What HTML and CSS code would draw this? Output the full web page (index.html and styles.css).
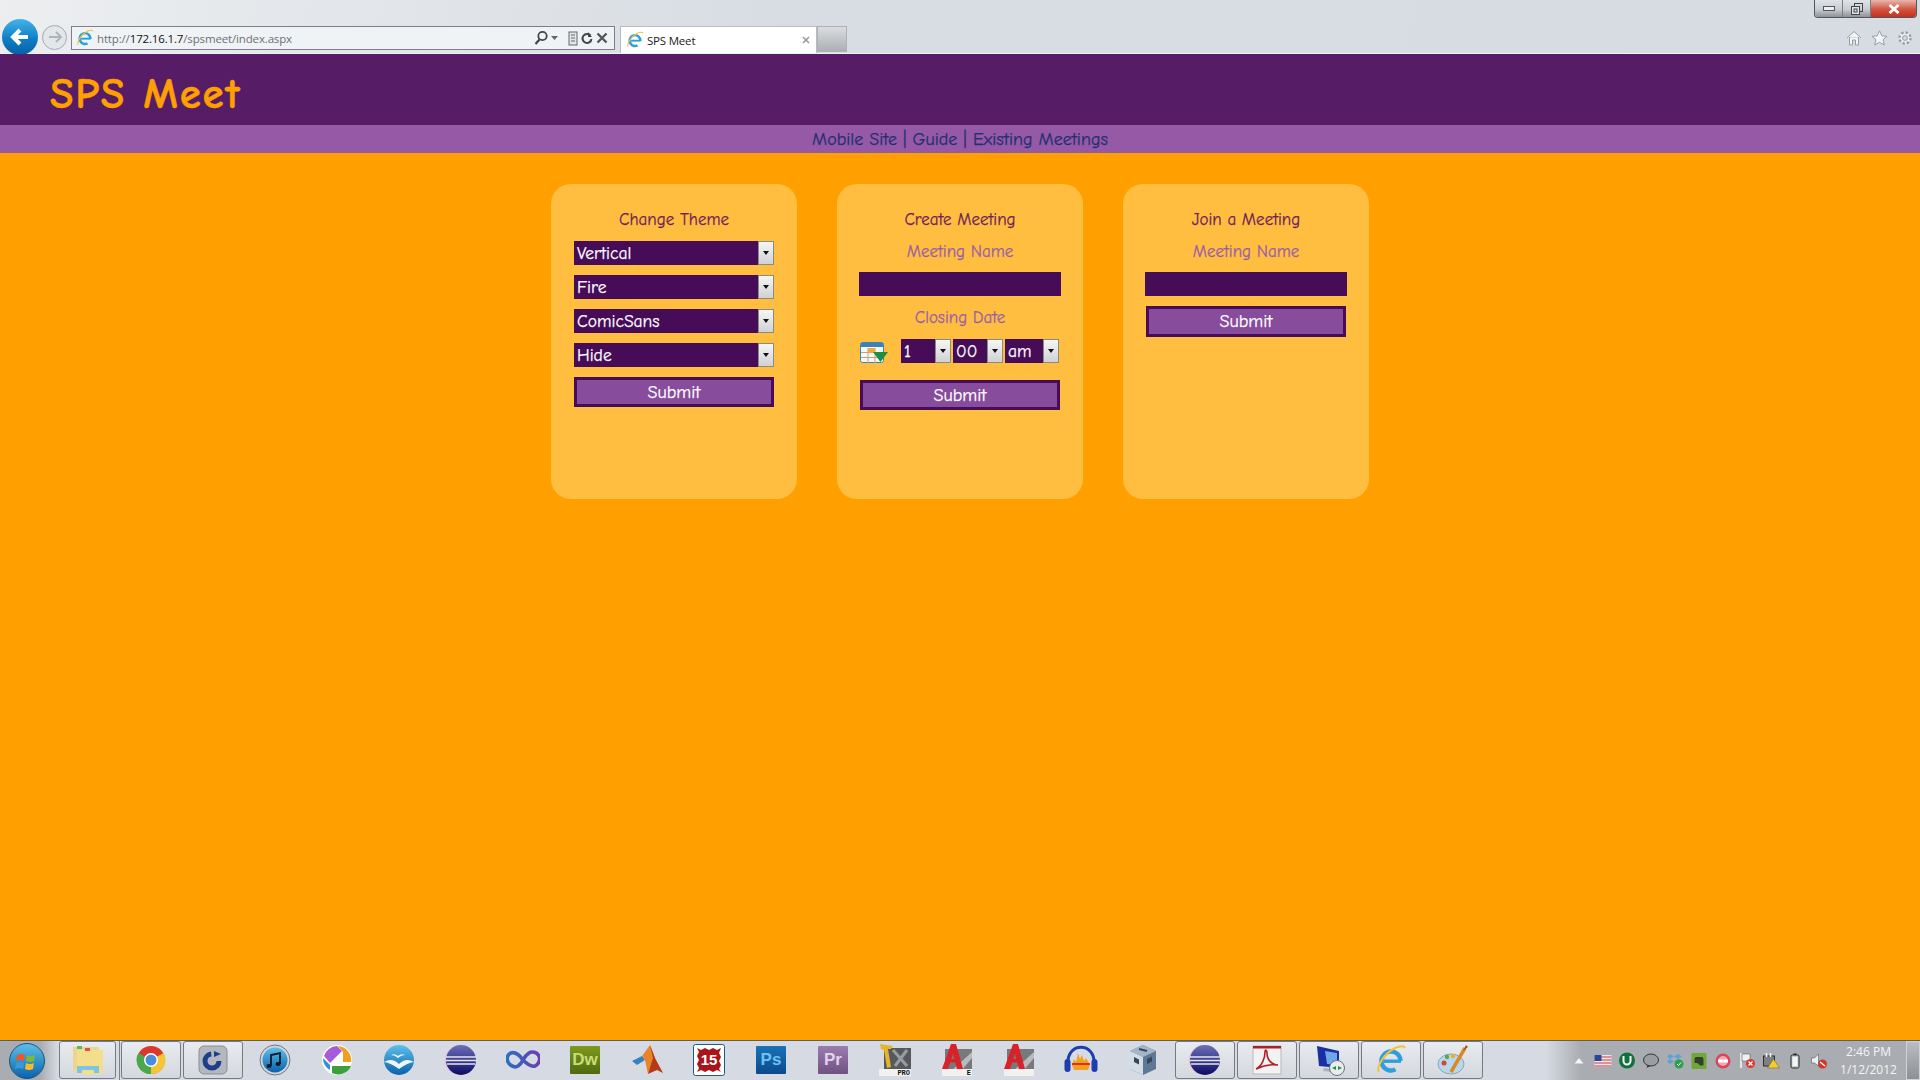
FILE: index.html
```html
<!DOCTYPE html>
<html lang="en">
<head>
  <meta charset="UTF-8" />
  <title>SPS Meet</title>
  <link rel="stylesheet" href="styles.css">
</head>
<body>
  <svg class="defs" width="0" height="0">
    <defs>
      <linearGradient id="gBlue" x1="0" y1="0" x2="0" y2="1"><stop offset="0" stop-color="#5cc0ea"/><stop offset="1" stop-color="#0a62ac"/></linearGradient>
      <linearGradient id="gNavy" x1="0" y1="0" x2="0" y2="1"><stop offset="0" stop-color="#6d6fb8"/><stop offset="1" stop-color="#0c0c62"/></linearGradient>
      <linearGradient id="gInf" x1="0" x2="1" y1="0" y2="0"><stop offset="0" stop-color="#2a6fc0"/><stop offset="1" stop-color="#6a3fb0"/></linearGradient>
      <symbol id="ie" viewBox="0 0 32 32">
        <circle cx="16" cy="17" r="9.500" fill="none" stroke="#2f9fdc" stroke-width="4.500" stroke-dasharray="49 11" transform="rotate(62 16 17)"/>
        <rect x="9" y="15.500" width="17" height="3.400" fill="#2f9fdc"/>
        <path d="M4 28C1 24 8 10 20 4c5-2 9-2 10 0" fill="none" stroke="#f3c33b" stroke-width="2"/>
      </symbol>
      <symbol id="eclipse" viewBox="0 0 32 32">
        <circle cx="15" cy="16" r="15" fill="#e9b6dc"/>
        <circle cx="16" cy="16" r="15" fill="url(#gNavy)"/>
        <path d="M1 13h30M1 16.500h30M2 20h28" stroke="#e6e6f2" stroke-width="1.300"/>
      </symbol>
      <symbol id="acad" viewBox="0 0 32 32">
        <rect x="4" y="5" width="27" height="22" fill="#77797c"/>
        <path d="M10 27 31 8v6L20 27z" fill="#b9bbbe"/>
        <rect x="1" y="25" width="30" height="7" fill="#f1f1f1"/>
        <polygon points="1,25 10,0 15,0 22,25 16,25 12,10 7,25" fill="#d8222a"/>
        <rect x="8" y="15" width="9" height="3.500" fill="#d8222a"/>
      </symbol>
    </defs>
  </svg>

  <!-- browser toolbar -->
  <div class="chrome">
    <div class="chrome-left">
      <div class="nav-round">
        <div class="back"><svg width="22" height="22" viewBox="0 0 22 22"><path d="M19 11H5M11 4l-7 7 7 7" fill="none" stroke="#fff" stroke-width="4"/></svg></div>
        <div class="forward"><svg width="16" height="16" viewBox="0 0 16 16"><path d="M2 8h11M9 3l5 5-5 5" fill="none" stroke="#aeb4ba" stroke-width="2"/></svg></div>
      </div>
      <div class="address">
        <svg class="fav" width="18" height="18"><use href="#ie"/></svg>
        <span class="url">http://<b>172.16.1.7</b>/spsmeet/index.aspx</span>
        <span class="addr-tools">
          <svg width="14" height="16" viewBox="0 0 14 16"><circle cx="8.500" cy="6" r="4.200" fill="none" stroke="#444" stroke-width="1.800"/><path d="M5.500 9.500 1.500 14" stroke="#444" stroke-width="2.200"/></svg>
          <svg width="8" height="8" viewBox="0 0 8 8"><path d="M0 2h7L3.500 6z" fill="#666"/></svg>
          <svg class="gap" width="10" height="15" viewBox="0 0 10 15"><rect x="1" y="1" width="8" height="13" fill="#e3e6e8" stroke="#666"/><path d="M3 4h4M3 7h4M3 10h4" stroke="#666"/></svg>
          <svg width="12" height="14" viewBox="0 0 12 14"><path d="M9.500 4.500A4.500 4.500 0 1 0 10.500 8" fill="none" stroke="#444" stroke-width="2"/><path d="M7 1v5h4z" fill="#444"/></svg>
          <svg width="12" height="12" viewBox="0 0 12 12"><path d="M1.500 1.500l9 9M10.500 1.500l-9 9" stroke="#555" stroke-width="2.400"/></svg>
        </span>
      </div>
      <div class="tab">
        <svg class="fav" width="18" height="18"><use href="#ie"/></svg>
        <span class="tab-title">SPS Meet</span>
        <svg width="8" height="8" viewBox="0 0 8 8"><path d="M1 1l6 6M7 1L1 7" stroke="#999" stroke-width="1.600"/></svg>
      </div>
      <div class="new-tab"></div>
    </div>
    <div class="chrome-right">
      <div class="win-btns">
        <div class="win min"><span></span></div>
        <div class="win restore"><svg width="12" height="12" viewBox="0 0 12 12"><rect x="3.500" y="0.500" width="8" height="8" fill="none" stroke="#444"/><rect x="0.500" y="3.500" width="8" height="8" fill="#dfe2e6" stroke="#444"/><rect x="3" y="6" width="3" height="3" fill="none" stroke="#444"/></svg></div>
        <div class="win close"><svg width="12" height="10" viewBox="0 0 12 10"><path d="M1.500 1l9 8M10.500 1l-9 8" stroke="#fff" stroke-width="2.800"/></svg></div>
      </div>
      <div class="tools">
        <svg width="16" height="16" viewBox="0 0 16 16"><path d="M1 8l7-6.500L15 8M3.500 7v8h3v-5h3v5h3V7" fill="#f4f5f7" stroke="#989ca1"/></svg>
        <svg width="17" height="16" viewBox="0 0 17 16"><polygon points="8.500,0.800 10.800,5.800 16,6.300 12,9.800 13.300,15 8.500,12.300 3.700,15 5,9.800 1,6.300 6.200,5.800" fill="#f4f5f7" stroke="#989ca1"/></svg>
        <svg width="16" height="16" viewBox="0 0 16 16"><circle cx="8" cy="8" r="5.500" fill="#eef0f2" stroke="#989ca1" stroke-width="2.400" stroke-dasharray="2.300 2"/><circle cx="8" cy="8" r="2.400" fill="#d8dce2" stroke="#989ca1"/></svg>
      </div>
    </div>
  </div>

  <header class="site-head">
    <h1>SPS Meet</h1>
  </header>
  <nav class="site-nav">
    <a href="#">Mobile Site</a> | <a href="#">Guide</a> | <a href="#">Existing Meetings</a>
  </nav>

  <main class="content">
    <section class="card">
      <h2>Change Theme</h2>
      <div class="stack">
        <div class="drop"><span class="drop-val">Vertical</span><span class="drop-arrow"></span></div>
        <div class="drop"><span class="drop-val">Fire</span><span class="drop-arrow"></span></div>
        <div class="drop"><span class="drop-val">ComicSans</span><span class="drop-arrow"></span></div>
        <div class="drop"><span class="drop-val">Hide</span><span class="drop-arrow"></span></div>
        <button class="submit">Submit</button>
      </div>
    </section>

    <section class="card">
      <h2>Create Meeting</h2>
      <label class="field-label">Meeting Name</label>
      <input class="text-box" type="text" />
      <label class="field-label closing">Closing Date</label>
      <div class="date-row">
        <svg class="cal" width="28" height="22" viewBox="0 0 28 22">
          <rect x="0.500" y="0.500" width="23" height="20" rx="2" fill="#f4f8fb" stroke="#3b83b5"/>
          <rect x="1" y="1" width="22" height="4" fill="#3b83b5"/>
          <path d="M1 10.500h22M1 15.500h22M8 6v15M15 6v15" stroke="#c3a27b"/>
          <rect x="8" y="6" width="7" height="5" fill="#f0a93a"/>
          <polygon points="13,10 28,10 20.500,20" fill="#1f8f3c"/>
        </svg>
        <div class="drop small"><span class="drop-val">1</span><span class="drop-arrow"></span></div>
        <div class="drop small"><span class="drop-val">00</span><span class="drop-arrow"></span></div>
        <div class="drop small wide"><span class="drop-val">am</span><span class="drop-arrow"></span></div>
      </div>
      <button class="submit">Submit</button>
    </section>

    <section class="card">
      <h2>Join a Meeting</h2>
      <label class="field-label">Meeting Name</label>
      <input class="text-box" type="text" />
      <button class="submit join">Submit</button>
    </section>
  </main>

  <!-- windows taskbar -->
  <footer class="taskbar">
    <div class="start">
      <svg width="36" height="36" viewBox="0 0 36 36">
        <circle cx="18" cy="18" r="17.500" fill="url(#gBlue)" stroke="#24506e"/>
        <path d="M8 12q4-2 8 0l-1 6q-4-2-8 0z" fill="#e9582a"/>
        <path d="M18 12q4 2 8 0l-1 6q-4 2-8 0z" fill="#7cb83a"/>
        <path d="M7 20q4-2 8 0l-1 6q-4-2-8 0z" fill="#3a9ad8"/>
        <path d="M17 20q4 2 8 0l-1 6q-4 2-8 0z" fill="#f4bb2c"/>
      </svg>
    </div>

    <div class="task stacked"><div class="task-btn">
      <svg width="32" height="30" viewBox="0 0 32 30"><rect x="1" y="2" width="26" height="24" fill="#e9d690"/><rect x="5" y="5" width="26" height="24" fill="#f5dd8e"/><rect x="5" y="1" width="5" height="3" fill="#5cb85c"/><rect x="13" y="3" width="5" height="3" fill="#d9534f"/><path d="M5 28v-7h22v7h-5v-3H10v3z" fill="#7cc4e8"/></svg>
    </div></div>
    <div class="task"><div class="task-btn">
      <svg width="30" height="30" viewBox="0 0 30 30"><circle cx="15" cy="15" r="14" fill="#d9382a"/><path d="M15 15 27.500 8A14 14 0 0 1 15 29z" fill="#f4c534"/><path d="M15 15 15 29A14 14 0 0 1 2.500 8z" fill="#4ba84a"/><circle cx="15" cy="15" r="7" fill="#fff"/><circle cx="15" cy="15" r="5.500" fill="#4a8cd8"/></svg>
    </div></div>
    <div class="task"><div class="task-btn">
      <svg width="30" height="30" viewBox="0 0 30 30"><rect x="1" y="1" width="28" height="28" rx="5" fill="#b4b8be" stroke="#8b8f95"/><circle cx="14" cy="16" r="7" fill="none" stroke="#1c3f8c" stroke-width="5" stroke-dasharray="32 12"/><path d="M16 6l7 3-7 3z" fill="#1c3f8c"/></svg>
    </div></div>
    <div class="task">
      <svg width="32" height="32" viewBox="0 0 32 32"><circle cx="16" cy="16" r="15" fill="#cfd6dc" stroke="#70767c"/><circle cx="16" cy="16" r="12.500" fill="url(#gBlue)"/><path d="M12 22V11l9-2v11" fill="none" stroke="#101828" stroke-width="1.800"/><ellipse cx="10" cy="22" rx="2.500" ry="2" fill="#101828"/><ellipse cx="19" cy="20" rx="2.500" ry="2" fill="#101828"/></svg>
    </div>
    <div class="task">
      <svg width="32" height="32" viewBox="0 0 32 32"><circle cx="16" cy="16" r="15" fill="#fff"/><path d="M17 2A14 14 0 0 1 30 18H22V8z" fill="#f0a020"/><path d="M16 2l5 5L9 19 3 12A14 14 0 0 1 16 2z" fill="#a75bd8"/><path d="M2 14l7 7v5A14 14 0 0 1 2 14z" fill="#2f8fd8"/><path d="M11 22H30A14 14 0 0 1 11 29z" fill="#3aa03a"/></svg>
    </div>
    <div class="task">
      <svg width="32" height="32" viewBox="0 0 32 32"><circle cx="16" cy="16" r="15" fill="url(#gBlue)"/><path d="M1 18q8-5 15 2 7-7 15-2-7 1-15 7-8-6-15-7z" fill="#f2f5f8"/><path d="M8 11q4-2 7 1 3-3 7-1-4 0-7 3-3-3-7-3z" fill="#f2f5f8"/></svg>
    </div>
    <div class="task"><svg width="32" height="32"><use href="#eclipse"/></svg></div>
    <div class="task">
      <svg width="34" height="20" viewBox="0 0 34 20"><path d="M17 10C12 3 8 2 5 3S0 8 2 12s7 6 10 4 4-4 5-6 3-5 6-7 8-1 10 3-1 9-4 10-6 0-12-6" fill="none" stroke="url(#gInf)" stroke-width="3.600"/></svg>
    </div>
    <div class="task"><div class="tile dw">Dw</div></div>
    <div class="task">
      <svg width="32" height="32" viewBox="0 0 32 32"><polygon points="1,17 11,12 14,16 6,21" fill="#3a7fc0"/><polygon points="11,12 19,1 24,14 17,30 14,16" fill="#e8842a"/><polygon points="19,1 24,14 32,29 26,26 17,30 22,14" fill="#b53a1a"/></svg>
    </div>
    <div class="task">
      <svg width="32" height="32" viewBox="0 0 32 32">
        <rect x="0.500" y="0.500" width="31" height="31" rx="2" fill="#fff" stroke="#1a5a8c"/>
        <polygon points="4,4 8,6 12,4 16,6 20,4 24,6 28,4 26,9 28,13 26,17 28,21 26,25 28,28 24,26 20,28 16,26 12,28 8,26 4,28 6,24 4,20 6,16 4,12 6,8" fill="#a8141a"/>
        <text class="stamp" x="16" y="21" text-anchor="middle">15</text>
      </svg>
    </div>
    <div class="task"><div class="tile ps">Ps</div></div>
    <div class="task"><div class="tile pr">Pr</div></div>
    <div class="task">
      <svg width="32" height="32" viewBox="0 0 32 32"><rect x="5" y="4" width="27" height="21" fill="#55585c"/><path d="M14 6l14 16M28 6 16 22" stroke="#9a9da0" stroke-width="3"/><polygon points="1,0 14,2 12,5 9,5 12,23 8,24 5,6 2,5" fill="#e5b32c"/><rect x="0" y="25" width="32" height="7" fill="#f1f1f1"/><text class="tag" x="31" y="31" text-anchor="end">PRO</text></svg>
    </div>
    <div class="task"><svg width="32" height="32" viewBox="0 0 32 32"><use href="#acad"/><text class="tag" x="30" y="31" text-anchor="end">E</text></svg></div>
    <div class="task"><svg width="32" height="32"><use href="#acad"/></svg></div>
    <div class="task">
      <svg width="34" height="30" viewBox="0 0 34 30"><path d="M4 18C3 -3 31 -3 30 18" fill="none" stroke="#1c3fb0" stroke-width="3"/><rect x="0.500" y="14" width="6" height="13" rx="3" fill="#1c3fb0"/><rect x="27.500" y="14" width="6" height="13" rx="3" fill="#1c3fb0"/><path d="M8 20l2-6 2 3 2-9 2 6 2-4 2 6 2-3 4 7-2 5H10z" fill="#f4a020"/><path d="M8 19h18" stroke="#e03020" stroke-width="2"/></svg>
    </div>
    <div class="task">
      <svg width="28" height="32" viewBox="0 0 28 32"><polygon points="14,1 27,7 27,25 14,31 1,25 1,7" fill="#5f7896"/><polygon points="14,1 27,7 14,13 1,7" fill="#a5b4c6"/><polygon points="1,7 14,13 14,31 1,25" fill="#d4dce6"/><path d="M5 13l5 2.500v5L5 18zM18 15l5-2.500v5L18 20z" fill="#33475e"/><path d="M10 5l8 2" stroke="#33475e" stroke-width="2"/></svg>
    </div>
    <div class="task"><div class="task-btn"><svg width="32" height="32"><use href="#eclipse"/></svg></div></div>
    <div class="task"><div class="task-btn">
      <svg width="30" height="30" viewBox="0 0 30 30"><rect x="1" y="1" width="28" height="28" fill="#f2f2f2" stroke="#b9b9b9"/><rect x="1" y="1" width="28" height="2.500" fill="#a8202a"/><path d="M4 24c6-3 9-11 9-17 0-3 2-2 2 1 0 7 5 12 11 12-7-1-16 1-22 4z" fill="none" stroke="#b01f28" stroke-width="1.600"/></svg>
    </div></div>
    <div class="task"><div class="task-btn">
      <svg width="32" height="32" viewBox="0 0 32 32"><polygon points="4,2 26,7 26,24 6,22" fill="#1c2fa0"/><polygon points="12,7 24,9 24,21 14,20" fill="#6ea8e8"/><path d="M11 24l8 1v3l-9-1z" fill="#aab2ba"/><circle cx="24" cy="24" r="7.500" fill="#e8ecef" stroke="#6c7278"/><path d="M19 24l4-2v4zM29 24l-4-2v4z" fill="#2e8f3a"/></svg>
    </div></div>
    <div class="task"><div class="task-btn"><svg width="32" height="32"><use href="#ie"/></svg></div></div>
    <div class="task"><div class="task-btn">
      <svg width="32" height="32" viewBox="0 0 32 32"><ellipse cx="14" cy="20" rx="13" ry="10" fill="#b8d8ea" stroke="#7fa8c0"/><circle cx="7" cy="19" r="2.500" fill="#d8423a"/><circle cx="10" cy="13" r="2.200" fill="#5aa84a"/><circle cx="16" cy="12" r="2.200" fill="#e8b030"/><path d="M14 28 28 4" stroke="#d88a2a" stroke-width="3.500"/><path d="M26 7l3-6 2 2z" fill="#8a5a2a"/></svg>
    </div></div>

    <div class="tray">
      <svg width="9" height="6" viewBox="0 0 9 6"><path d="M0 5.500 4.500 0 9 5.500z" fill="#f4f5f6"/></svg>
      <svg width="17" height="12" viewBox="0 0 17 12"><rect width="17" height="12" fill="#e8e8f0"/><path d="M0 2h17M0 5h17M0 8h17M0 11h17" stroke="#d43c3c"/><rect width="7" height="6" fill="#2a46a0"/></svg>
      <svg width="17" height="17" viewBox="0 0 17 17"><circle cx="8.500" cy="8.500" r="8" fill="#12703c"/><path d="M5 4v5a3.500 3.500 0 0 0 7 0V4" fill="none" stroke="#f2f6f2" stroke-width="2"/></svg>
      <svg width="17" height="16" viewBox="0 0 17 16"><ellipse cx="8.500" cy="7" rx="7.500" ry="6" fill="#9a9ea2" stroke="#33363a"/><path d="M5 12l-1 3 4-2" fill="#33363a"/></svg>
      <svg width="18" height="17" viewBox="0 0 18 17"><path d="M4 2l4 2.500L4 7 1 4.500zM12 2l4 2.500L12 7 8 4.500zM4 7l4 2.500L4 12 1 9.500zM12 7l4 2.500-4 2.500-4-2.500z" fill="#5aa3d8"/><circle cx="13" cy="12" r="4.500" fill="#2e9f4a"/><path d="M11 12l1.500 1.500 2.500-3" fill="none" stroke="#fff"/></svg>
      <svg width="15" height="16" viewBox="0 0 15 16"><rect width="15" height="16" rx="1" fill="#6fa838"/><path d="M4 4h6q2 0 2 3v5q-2 1-4 0l-2-2H3V6z" fill="#33402a"/></svg>
      <svg width="16" height="16" viewBox="0 0 16 16"><circle cx="8" cy="8" r="7.500" fill="#d9455a"/><circle cx="8" cy="8" r="5" fill="#f0a6ae"/><rect x="3" y="6.500" width="10" height="3" fill="#fff"/></svg>
      <svg width="16" height="17" viewBox="0 0 16 17"><path d="M2 1v15" stroke="#f4f5f6" stroke-width="1.600"/><path d="M3 2h8v7H3z" fill="#eef0f2" stroke="#44484c" stroke-width="0.500"/><circle cx="11.500" cy="11.500" r="4.500" fill="#d83a2a"/><path d="M9.500 9.500l4 4M13.500 9.500l-4 4" stroke="#fff" stroke-width="1.200"/></svg>
      <svg width="17" height="17" viewBox="0 0 17 17"><rect x="1" y="4" width="11" height="10" fill="#7e8285" stroke="#2c2e30"/><path d="M4 1v4M8 1v4" stroke="#f4f5f6" stroke-width="1.600"/><polygon points="11,7 17,16 5,16" fill="#f2cc30" stroke="#6a5a10" stroke-width="0.500"/></svg>
      <svg width="10" height="16" viewBox="0 0 10 16"><rect x="1" y="2" width="8" height="13" rx="1.500" fill="#c7cccf" stroke="#222"/><rect x="3.500" y="0.500" width="3" height="1.500" fill="#222"/><rect x="2.500" y="4" width="5" height="9" fill="#f2f4f5"/></svg>
      <svg width="17" height="16" viewBox="0 0 17 16"><path d="M1 5h3l4-4v12L4 10H1z" fill="#eef0f2" stroke="#55595d" stroke-width="0.600"/><circle cx="12" cy="11" r="4.500" fill="#d8352a"/><path d="M9.500 9l5 4" stroke="#fff" stroke-width="1.500"/></svg>
      <div class="clock"><span>2:46 PM</span><span>1/12/2012</span></div>
      <div class="show-desk"></div>
    </div>
  </footer>
</body>
</html>
```

FILE: styles.css
```css
* {
  box-sizing: border-box;
}

html, body {
  height: 100%;
}

body {
  margin: 0;
  display: flex;
  flex-direction: column;
  overflow: hidden;
  background-color: #ffa000;
  font-family: "Comic Sans MS", "Comic Neue", "Lato", sans-serif;
}

.defs {
  display: block;
  height: 0;
}

/* browser toolbar */
.chrome {
  height: 54px;
  display: flex;
  justify-content: space-between;
  background: linear-gradient(100deg, #eceef0 0%, #d8dde3 40%, #d7dce3 100%);
  border-bottom: 1px solid #eef0f3;
  font-family: "Open Sans", sans-serif;
}

.chrome-left {
  display: flex;
  align-items: flex-start;
  padding-top: 19px;
}

.nav-round {
  width: 71px;
  display: flex;
  align-items: center;
  padding-left: 2px;
}

.back {
  width: 36px;
  height: 36px;
  border-radius: 50%;
  display: flex;
  align-items: center;
  justify-content: center;
  background: linear-gradient(#45b4e8 0%, #0d7fc6 55%, #0b5fa6 100%);
  flex-shrink: 0;
}

.forward {
  width: 25px;
  height: 25px;
  border-radius: 50%;
  border: 1px solid #a5abb2;
  background: #e3e7ea;
  display: flex;
  align-items: center;
  justify-content: center;
  margin-left: 4px;
}

.address {
  width: 544px;
  height: 24px;
  margin-top: 7px;
  display: flex;
  align-items: center;
  padding: 0 4px;
  background: #f0f3f5;
  border: 1px solid #7d8186;
  font-size: 11.500px;
  color: #6c7075;
}

.fav {
  flex-shrink: 0;
  margin-right: 3px;
}

.url {
  flex: 1;
  letter-spacing: -0.150px;
}

.url b {
  font-weight: 400;
  color: #111;
}

.addr-tools {
  display: flex;
  align-items: center;
  gap: 3px;
  padding-right: 2px;
}

.addr-tools .gap {
  margin-left: 6px;
}

.tab {
  width: 197px;
  height: 27px;
  margin: 7px 0 0 5px;
  display: flex;
  align-items: center;
  padding: 0 6px 0 5px;
  background: #fff;
  border: 1px solid #b9bdc2;
  border-bottom: none;
  font-size: 11.500px;
  color: #222;
}

.tab-title {
  flex: 1;
  letter-spacing: -0.200px;
}

.new-tab {
  width: 30px;
  height: 26px;
  margin-top: 7px;
  background: linear-gradient(#dadcdf, #adb0b3);
  border: 1px solid #aeb2b6;
}

.chrome-right {
  display: flex;
  flex-direction: column;
  align-items: flex-end;
  padding-right: 3px;
}

.win-btns {
  display: flex;
  height: 18px;
  border: 1px solid #54585c;
  border-top: none;
  border-radius: 0 0 4px 4px;
  overflow: hidden;
}

.win {
  display: flex;
  align-items: center;
  justify-content: center;
  width: 28px;
  background: linear-gradient(#dfe2e6 0%, #c9ccd0 55%, #8e9196 100%);
  border-right: 1px solid #7a7e83;
}

.win.close {
  width: 45px;
  border-right: none;
  background: linear-gradient(#e8b6ad 0%, #d0553f 55%, #c72f1f 100%);
}

.min span {
  width: 12px;
  height: 5px;
  border: 1px solid #555;
  background: #eceef0;
}

.tools {
  display: flex;
  gap: 9px;
  margin-top: 12px;
  padding-right: 4px;
}

/* site header */
.site-head {
  height: 71px;
  background-color: #561c66;
  padding: 8px 0 0 50px;
  display: flex;
  align-items: center;
}

.site-head h1 {
  margin: 0;
  font-size: 43px;
  font-weight: 700;
  color: #ffa000;
  letter-spacing: 1.800px;
  -webkit-text-stroke: 0.500px #ffa000;
}

.site-nav {
  height: 28px;
  line-height: 30px;
  background-color: #9659a6;
  text-align: center;
  font-size: 18px;
  color: #1f2f70;
  -webkit-text-stroke: 0.250px #1f2f70;
}

.site-nav a {
  color: #1f2f70;
  text-decoration: none;
}

/* cards */
.content {
  flex: 1;
  display: flex;
  justify-content: center;
  align-items: flex-start;
  gap: 40px;
  padding-top: 31px;
}

.card {
  width: 246px;
  height: 315px;
  background-color: #ffbe40;
  border-radius: 20px;
  padding: 24px 23px 0;
  display: flex;
  flex-direction: column;
  align-items: center;
}

.card h2 {
  margin: 0;
  height: 24px;
  line-height: 24px;
  font-size: 17px;
  font-weight: 400;
  color: #6f1f5a;
  -webkit-text-stroke: 0.250px #6f1f5a;
}

.stack {
  width: 100%;
  display: flex;
  flex-direction: column;
  gap: 10px;
  margin-top: 9px;
}

.field-label {
  height: 24px;
  line-height: 24px;
  margin-top: 8px;
  font-size: 17px;
  color: #9a5ea8;
  -webkit-text-stroke: 0.250px #9a5ea8;
}

.field-label.closing {
  margin-top: 10px;
}

.text-box {
  width: 202px;
  height: 24px;
  margin-top: 8px;
  border: none;
  background-color: #470c58;
  flex-shrink: 0;
}

.drop {
  display: flex;
  height: 24px;
  width: 100%;
  background-color: #470c58;
  color: #fff;
  font-size: 17.500px;
  -webkit-text-stroke: 0.250px #fff;
}

.drop-val {
  flex: 1;
  line-height: 24px;
  padding-left: 3px;
}

.drop-arrow {
  width: 16px;
  display: flex;
  align-items: center;
  justify-content: center;
  background: linear-gradient(#f6f6f6, #cfd1d3);
  border: 1px solid #8a8c80;
}

.drop-arrow::after {
  content: "";
  border-left: 3.500px solid transparent;
  border-right: 3.500px solid transparent;
  border-top: 4px solid #111;
}

.submit {
  width: 200px;
  height: 30px;
  border: 3px solid #470c58;
  background-color: #884c9c;
  color: #fff;
  font-family: inherit;
  font-size: 18px;
  padding: 0;
  flex-shrink: 0;
  cursor: pointer;
  -webkit-text-stroke: 0.250px #fff;
}

.card > .submit {
  margin-top: 17px;
}

.card > .submit.join {
  margin-top: 10px;
  height: 31px;
}

.date-row {
  width: 200px;
  display: flex;
  align-items: center;
  gap: 2px;
  height: 24px;
  margin-top: 9px;
}

.cal {
  flex-shrink: 0;
  margin: 4px 11px 0 0;
}

.drop.small {
  width: 50px;
  flex-shrink: 0;
}

.drop.small.wide {
  width: 54px;
}

/* windows taskbar */
.taskbar {
  height: 40px;
  display: flex;
  align-items: center;
  background-color: #d6dbe3;
  border-top: 1px solid #5c5f63;
}

.start {
  width: 58px;
  height: 100%;
  display: flex;
  align-items: center;
  justify-content: center;
  padding-right: 4px;
  background: linear-gradient(90deg, #a9adb1 70%, #d6dbe3 100%);
  flex-shrink: 0;
}

.task {
  width: 62px;
  height: 100%;
  display: flex;
  align-items: center;
  justify-content: center;
  flex-shrink: 0;
  padding: 0 1px 1px;
}

.task.stacked {
  padding: 0 4px 1px 1px;
  box-shadow: inset -3px 0 0 -2px #7d8186;
}

.task-btn {
  width: 100%;
  height: 100%;
  display: flex;
  align-items: center;
  justify-content: center;
  background: linear-gradient(#e8ebef, #d4d8de);
  border: 1px solid #777b80;
  border-radius: 3px;
}

.tile {
  width: 30px;
  height: 28px;
  display: flex;
  align-items: center;
  justify-content: center;
  font: 700 17px "Liberation Sans", sans-serif;
  border-radius: 1px;
}

.dw {
  background: linear-gradient(#7d9a1e, #4f6a10);
  color: #c9dc78;
}

.ps {
  background: linear-gradient(#1a72b8, #0b4a8a);
  color: #6cc2f0;
}

.pr {
  background: linear-gradient(#9a7cae, #6f5282);
  color: #e2d2ec;
}

.stamp {
  font: 700 15px "Liberation Sans", sans-serif;
  fill: #fff;
}

.tag {
  font: 700 7px "Liberation Mono", monospace;
  fill: #111;
}

.tray {
  flex: 1;
  height: 100%;
  display: flex;
  align-items: center;
  justify-content: flex-end;
  background: linear-gradient(90deg, #d6dbe3 60px, #a9adb1 95px);
  margin-left: 2px;
}

.tray > svg {
  width: 24px;
  flex-shrink: 0;
}

.clock {
  width: 75px;
  display: flex;
  flex-direction: column;
  align-items: center;
  font: 12px/18px "Open Sans", sans-serif;
  color: #f4f5f6;
}

.show-desk {
  width: 14px;
  height: 100%;
  background: linear-gradient(#b9bcc0, #8d9094);
  border: 1px solid #d0d3d6;
}
```
